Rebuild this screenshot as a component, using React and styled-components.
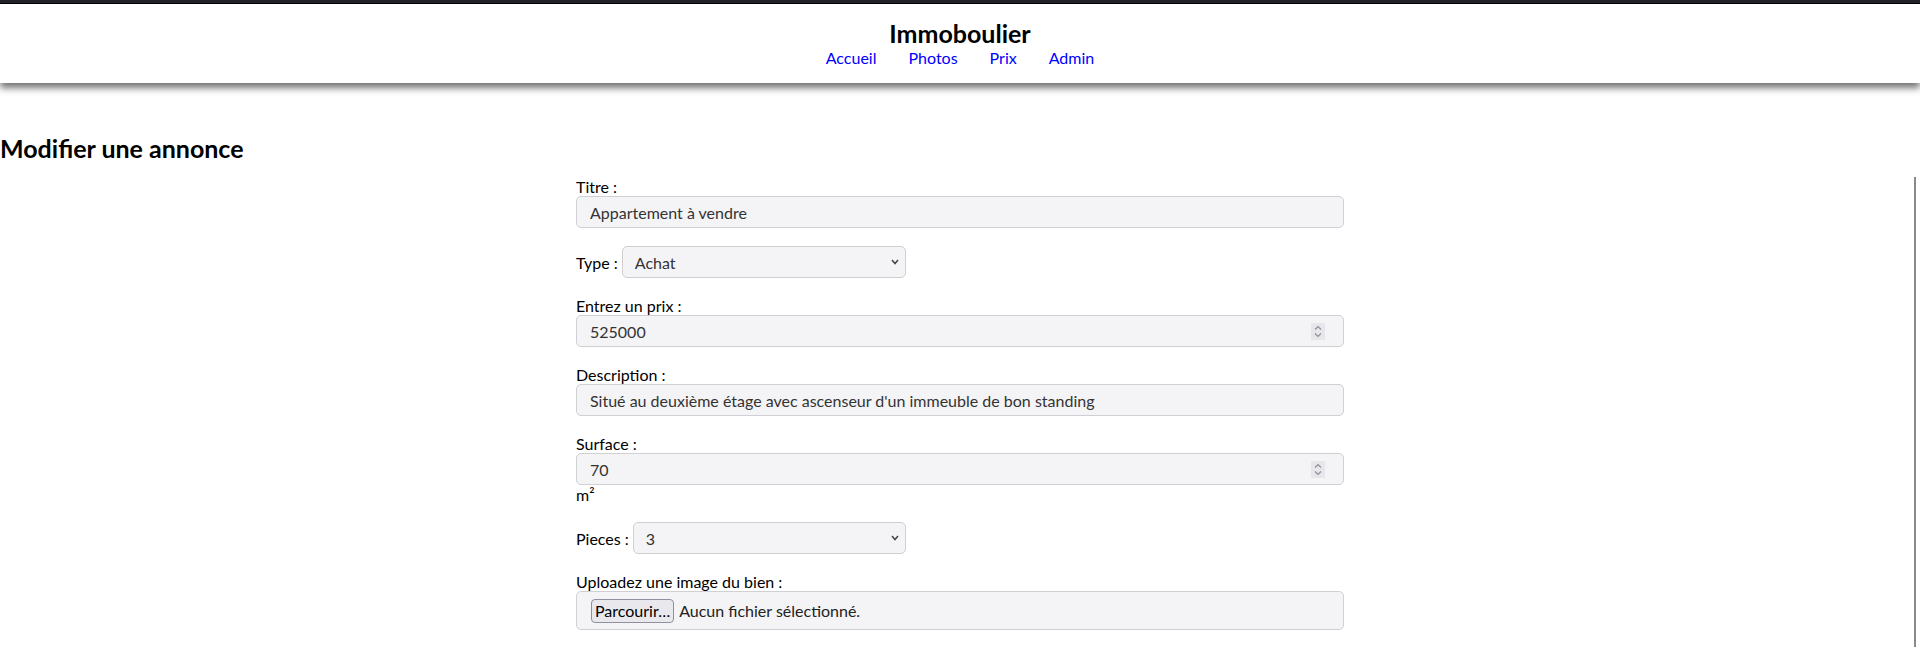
import styled, { createGlobalStyle } from "styled-components";

const GlobalStyle = createGlobalStyle`
    body {
        margin: 0;
        font-family: Lato, "Open Sans", sans-serif;
        background: #fff;
        color: #111;
    }
    * {
        box-sizing: border-box;
    }
`;

const TopBar = styled.div`
    height: 4px;
    background: #23222b;
    border-bottom: 1px solid #000;
`;

const Header = styled.header`
    background: #fff;
    text-align: center;
    padding: 14px 0 16px;
    box-shadow: 0 5px 7px rgba(0, 0, 0, 0.55);
    position: relative;
`;

const Brand = styled.div`
    font-size: 25px;
    font-weight: 700;
    line-height: 30px;
    color: #000;
`;

const Nav = styled.nav`
    display: flex;
    justify-content: center;
    gap: 32px;
    font-size: 16px;
    line-height: 19px;
`;

const NavLink = styled.a`
    color: #0000ff;
    text-decoration: none;
`;

const Main = styled.main`
    padding-top: 30px;
`;

const PageTitle = styled.h2`
    font-size: 25px;
    font-weight: 700;
    margin: 20px 0 14px;
    color: #000;
`;

const FormArea = styled.div`
    padding-left: 6px;
    margin-right: 4px;
    border-right: 2px solid #8a8a8a;
    min-height: 480px;
`;

const Form = styled.form`
    max-width: 768px;
    margin: 0 auto;
`;

const Group = styled.div`
    margin-bottom: 18px;
`;

const InlineGroup = styled.div`
    display: flex;
    align-items: center;
    gap: 4px;
    width: 330px;
    margin-bottom: 18px;
`;

const Label = styled.label`
    display: block;
    font-size: 16px;
    line-height: 19px;
    color: #000;
    white-space: nowrap;
`;

const Input = styled.input`
    display: block;
    width: 100%;
    height: 32px;
    padding: 0 13px;
    background: #f4f4f6;
    border: 1px solid #d0d0d4;
    border-radius: 5px;
    font-family: Lato, sans-serif;
    font-size: 16px;
    color: #333;
    outline: none;
`;

const NumberBox = styled.div`
    display: flex;
    align-items: center;
    height: 32px;
    padding: 0 18px 0 13px;
    background: #f4f4f6;
    border: 1px solid #d0d0d4;
    border-radius: 5px;
`;

const BareInput = styled.input`
    flex: 1;
    border: none;
    background: transparent;
    padding: 0;
    font-family: Lato, sans-serif;
    font-size: 16px;
    color: #333;
    outline: none;
`;

const Spinner = styled.span`
    display: flex;
    align-items: center;
    justify-content: center;
    width: 14px;
    height: 17px;
    background: #e7e7eb;
`;

const SelectWrap = styled.div`
    position: relative;
    flex: 1;
`;

const Select = styled.select`
    width: 100%;
    height: 32px;
    padding: 0 24px 0 12px;
    appearance: none;
    background: #f4f4f6;
    border: 1px solid #d0d0d4;
    border-radius: 5px;
    font-family: Lato, sans-serif;
    font-size: 16px;
    color: #333;
    outline: none;
`;

const Chevron = styled.svg`
    position: absolute;
    right: 7px;
    top: 13px;
    pointer-events: none;
`;

const Unit = styled.div`
    font-size: 16px;
    line-height: 19px;
    color: #000;
`;

const FileBox = styled.div`
    display: flex;
    align-items: center;
    gap: 5px;
    height: 39px;
    padding: 0 14px;
    background: #f4f4f6;
    border: 1px solid #d0d0d4;
    border-radius: 5px;
    font-size: 16px;
    color: #222;
`;

const FileButton = styled.button`
    height: 24px;
    padding: 0 3px;
    background: #e9e9ed;
    border: 1px solid #8f8f9d;
    border-radius: 4px;
    font-family: Lato, sans-serif;
    font-size: 16px;
    color: #000;
`;

const NumberField = ({ value }) => (
    <NumberBox>
        <BareInput type="text" defaultValue={value} />
        <Spinner>
            <svg width="8" height="13" viewBox="0 0 8 13" fill="none" stroke="#8f8f9d" strokeWidth="1.2">
                <path d="M1 4.5 L4 1.5 L7 4.5" />
                <path d="M1 8.5 L4 11.5 L7 8.5" />
            </svg>
        </Spinner>
    </NumberBox>
);

const SelectField = ({ value, options }) => (
    <SelectWrap>
        <Select defaultValue={value}>
            {options.map((o) => (
                <option key={o}>{o}</option>
            ))}
        </Select>
        <Chevron width="8" height="6" viewBox="0 0 8 6" fill="none" stroke="#444" strokeWidth="1.5">
            <path d="M1 1 L4 4.5 L7 1" />
        </Chevron>
    </SelectWrap>
);

const App = () => {
    return (
        <>
            <GlobalStyle />
            <TopBar />
            <Header>
                <Brand>Immoboulier</Brand>
                <Nav>
                    <NavLink href="#">Accueil</NavLink>
                    <NavLink href="#">Photos</NavLink>
                    <NavLink href="#">Prix</NavLink>
                    <NavLink href="#">Admin</NavLink>
                </Nav>
            </Header>
            <Main>
                <PageTitle>Modifier une annonce</PageTitle>
                <FormArea>
                    <Form onSubmit={(e) => e.preventDefault()}>
                        <Group>
                            <Label>Titre :</Label>
                            <Input type="text" defaultValue="Appartement à vendre" />
                        </Group>
                        <InlineGroup>
                            <Label>Type :</Label>
                            <SelectField value="Achat" options={["Achat", "Location"]} />
                        </InlineGroup>
                        <Group>
                            <Label>Entrez un prix :</Label>
                            <NumberField value="525000" />
                        </Group>
                        <Group>
                            <Label>Description :</Label>
                            <Input
                                type="text"
                                defaultValue="Situé au deuxième étage avec ascenseur d'un immeuble de bon standing"
                            />
                        </Group>
                        <Group>
                            <Label>Surface :</Label>
                            <NumberField value="70" />
                            <Unit>m²</Unit>
                        </Group>
                        <InlineGroup>
                            <Label>Pieces :</Label>
                            <SelectField value="3" options={["1", "2", "3", "4", "5"]} />
                        </InlineGroup>
                        <Group>
                            <Label>Uploadez une image du bien :</Label>
                            <FileBox>
                                <FileButton type="button">Parcourir…</FileButton>
                                <span>Aucun fichier sélectionné.</span>
                            </FileBox>
                        </Group>
                    </Form>
                </FormArea>
            </Main>
        </>
    );
};

export default App;
